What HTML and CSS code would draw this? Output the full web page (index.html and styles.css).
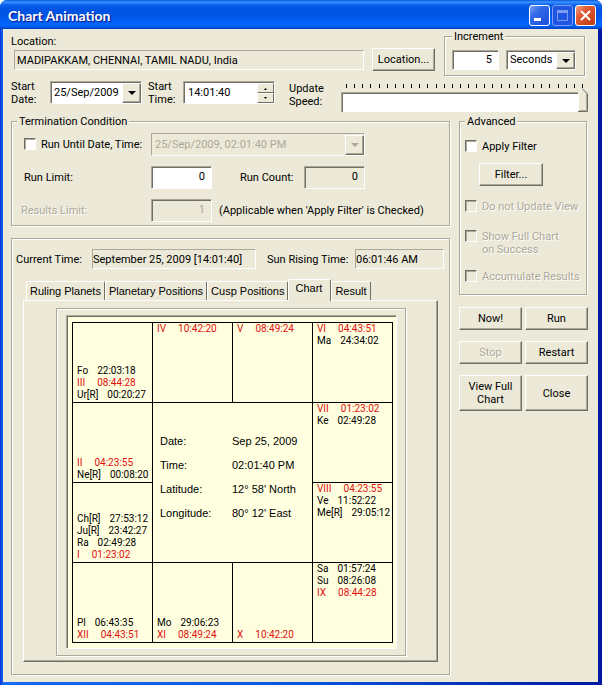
FILE: index.html
```html
<!DOCTYPE html>
<html lang="en">
<head>
    <meta charset="UTF-8">
    <meta name="viewport" content="width=device-width, initial-scale=1.0">
    <title>Chart Animation</title>
    <link rel="stylesheet" href="styles.css">
</head>
<body>

    <div class="window">
        <header class="titlebar">
            <h1>Chart Animation</h1>
            <button type="button" class="caption-btn" aria-label="Minimize">
                <svg width="19" height="19" viewBox="0 0 19 19"><path d="M4 12h7v3H4z" fill="#fff"/></svg>
            </button>
            <button type="button" class="caption-btn caption-disabled" aria-label="Maximize" disabled>
                <svg width="19" height="19" viewBox="0 0 19 19"><path d="M4.500 5v9.500h10V5M4 5h11" fill="none" stroke="#7f9df0" stroke-width="1"/><path d="M4 4h11v3H4z" fill="#7f9df0"/></svg>
            </button>
            <button type="button" class="caption-btn caption-close" aria-label="Close window">
                <svg width="19" height="19" viewBox="0 0 19 19"><path d="M5 5l9 9M14 5l-9 9" fill="none" stroke="#fff" stroke-width="2"/></svg>
            </button>
        </header>

        <main class="content">
            <div class="row row-location">
                <div class="location">
                    <label for="location">Location:</label>
                    <input type="text" id="location" class="static" readonly value="MADIPAKKAM, CHENNAI, TAMIL NADU, India">
                </div>
                <button type="button" class="btn btn-location">Location...</button>
                <fieldset class="group increment">
                    <legend>Increment</legend>
                    <input type="text" class="field number" aria-label="Increment value" value="5">
                    <span class="combo">
                        <select aria-label="Increment unit"><option>Seconds</option></select>
                    </span>
                </fieldset>
            </div>

            <div class="row row-start">
                <label for="start-date">Start<br>Date:</label>
                <span class="combo combo-date">
                    <select id="start-date"><option>25/Sep/2009</option></select>
                </span>
                <label for="start-time">Start<br>Time:</label>
                <span class="field spin">
                    <input type="text" id="start-time" value="14:01:40">
                    <span class="spin-buttons">
                        <button type="button" aria-label="Later"><svg width="5" height="3" viewBox="0 0 5 3"><path d="M1 3h3L2.500 1z"/></svg></button>
                        <button type="button" aria-label="Earlier"><svg width="5" height="3" viewBox="0 0 5 3"><path d="M1 0h3L2.500 2z"/></svg></button>
                    </span>
                </span>
                <label for="speed" class="speed-label">Update<br>Speed:</label>
                <div class="slider">
                    <div class="ticks"></div>
                    <input type="range" id="speed" min="1" max="30" value="30">
                </div>
            </div>

            <div class="columns">
                <div class="left">
                    <fieldset class="group termination">
                        <legend>Termination Condition</legend>
                        <label class="check"><input type="checkbox" id="until">Run Until Date, Time:</label>
                        <span class="combo combo-disabled">
                            <select aria-label="Run until" disabled><option>25/Sep/2009, 02:01:40 PM</option></select>
                        </span>
                        <label for="run-limit">Run Limit:</label>
                        <input type="text" id="run-limit" class="field number" value="0">
                        <label for="run-count" class="count-label">Run Count:</label>
                        <input type="text" id="run-count" class="field number readonly" readonly value="0">
                        <label for="results-limit" class="disabled">Results Limit:</label>
                        <input type="text" id="results-limit" class="field number readonly" disabled value="1">
                        <span class="note">(Applicable when 'Apply Filter' is Checked)</span>
                    </fieldset>

                    <section class="etched result">
                        <div class="times">
                            <label for="current-time">Current Time:</label>
                            <input type="text" id="current-time" class="static" readonly value="September 25, 2009 [14:01:40]">
                            <label for="sun-rise" class="sun-label">Sun Rising Time:</label>
                            <input type="text" id="sun-rise" class="static sun" readonly value="06:01:46 AM">
                        </div>

                        <div class="tabs" role="tablist">
                            <button type="button" role="tab">Ruling Planets</button>
                            <button type="button" role="tab">Planetary Positions</button>
                            <button type="button" role="tab">Cusp Positions</button>
                            <button type="button" role="tab" class="active" aria-selected="true">Chart</button>
                            <button type="button" role="tab">Result</button>
                        </div>
                        <div class="tab-panel" role="tabpanel">
                            <div class="etched frame">
                                <div class="sheet">
                                    <div class="chart">
                                        <div class="house bottom">
                                            <p>Fo<span>22:03:18</span></p>
                                            <p class="cusp">III<span>08:44:28</span></p>
                                            <p>Ur[R]<span>00:20:27</span></p>
                                        </div>
                                        <div class="house">
                                            <p class="cusp">IV<span>10:42:20</span></p>
                                        </div>
                                        <div class="house">
                                            <p class="cusp">V<span>08:49:24</span></p>
                                        </div>
                                        <div class="house">
                                            <p class="cusp">VI<span>04:43:51</span></p>
                                            <p>Ma<span>24:34:02</span></p>
                                        </div>
                                        <div class="house bottom">
                                            <p class="cusp">II<span>04:23:55</span></p>
                                            <p>Ne[R]<span>00:08:20</span></p>
                                        </div>
                                        <dl class="house details">
                                            <dt>Date:</dt><dd>Sep 25, 2009</dd>
                                            <dt>Time:</dt><dd>02:01:40 PM</dd>
                                            <dt>Latitude:</dt><dd>12° 58' North</dd>
                                            <dt>Longitude:</dt><dd>80° 12' East</dd>
                                        </dl>
                                        <div class="house">
                                            <p class="cusp">VII<span>01:23:02</span></p>
                                            <p>Ke<span>02:49:28</span></p>
                                        </div>
                                        <div class="house bottom">
                                            <p>Ch[R]<span>27:53:12</span></p>
                                            <p>Ju[R]<span>23:42:27</span></p>
                                            <p>Ra<span>02:49:28</span></p>
                                            <p class="cusp">I<span>01:23:02</span></p>
                                        </div>
                                        <div class="house">
                                            <p class="cusp">VIII<span>04:23:55</span></p>
                                            <p>Ve<span>11:52:22</span></p>
                                            <p>Me[R]<span>29:05:12</span></p>
                                        </div>
                                        <div class="house bottom">
                                            <p>Pl<span>06:43:35</span></p>
                                            <p class="cusp">XII<span>04:43:51</span></p>
                                        </div>
                                        <div class="house bottom">
                                            <p>Mo<span>29:06:23</span></p>
                                            <p class="cusp">XI<span>08:49:24</span></p>
                                        </div>
                                        <div class="house bottom">
                                            <p class="cusp">X<span>10:42:20</span></p>
                                        </div>
                                        <div class="house">
                                            <p>Sa<span>01:57:24</span></p>
                                            <p>Su<span>08:26:08</span></p>
                                            <p class="cusp">IX<span>08:44:28</span></p>
                                        </div>
                                    </div>
                                </div>
                            </div>
                        </div>
                    </section>
                </div>

                <aside class="right">
                    <fieldset class="group advanced">
                        <legend>Advanced</legend>
                        <label class="check"><input type="checkbox">Apply Filter</label>
                        <button type="button" class="btn btn-filter">Filter...</button>
                        <label class="check disabled"><input type="checkbox" disabled>Do not Update View</label>
                        <label class="check disabled"><input type="checkbox" disabled><span>Show Full Chart<br>on Success</span></label>
                        <label class="check disabled"><input type="checkbox" disabled>Accumulate Results</label>
                    </fieldset>
                    <div class="actions">
                        <button type="button" class="btn">Now!</button>
                        <button type="button" class="btn">Run</button>
                        <button type="button" class="btn disabled" disabled>Stop</button>
                        <button type="button" class="btn">Restart</button>
                        <button type="button" class="btn btn-tall">View Full<br>Chart</button>
                        <button type="button" class="btn btn-tall">Close</button>
                    </div>
                </aside>
            </div>
        </main>
    </div>

</body>
</html>
```
FILE: styles.css
```css
:root {
    --face: #ece9d8;
    --shadow: #aca899;
    --dark: #716f64;
}

* {
    box-sizing: border-box;
}

body {
    margin: 0;
    background: #fff;
    color: #000;
    font: 11px/13px Roboto, "DejaVu Sans Condensed", sans-serif;
}

input, select, button {
    margin: 0;
    font: inherit;
    color: inherit;
}

p, dl, dd, h1 {
    margin: 0;
}

label, legend, .note {
    white-space: nowrap;
}

/* window */
.window {
    display: flex;
    flex-direction: column;
    min-height: 100vh;
    padding: 0 4px 3px 3px;
    border-radius: 7px 7px 0 0;
    background: linear-gradient(90deg, #0831d9, #166aee 3px, #0855dd 50%, #0019a0 calc(100% - 2px));
}

.titlebar {
    display: flex;
    align-items: center;
    gap: 2px;
    height: 29px;
    margin: 0 -4px 0 -3px;
    padding: 2px 6px 0 8px;
    border-radius: 7px 7px 0 0;
    background: linear-gradient(#0a58dc, #3a93ff 2px, #0a60ee 5px, #0054e3 9px, #0055e5 16px, #0066ff 24px, #0062f8 26px, #0040c0);
}

.titlebar h1 {
    flex: 1;
    color: #fff;
    font: bold 14px/18px Lato, sans-serif;
    text-shadow: 1px 1px 1px #0f1089;
}

.caption-btn {
    display: flex;
    width: 21px;
    height: 21px;
    padding: 0;
    border: 1px solid #fff;
    border-radius: 3px;
    background: linear-gradient(135deg, #7ba2f0, #3169e8 35%, #1c50d8);
}

.caption-disabled {
    border-color: #7f9df0;
    background: #1f55e0;
}

.caption-close {
    background: linear-gradient(135deg, #f0a080, #e05a34 35%, #c03c10);
}

.content {
    flex: 1;
    padding: 1px 10px 7px 8px;
    background: var(--face);
}

/* bevels and frames */
.group, .etched {
    border: 1px solid var(--shadow);
    box-shadow: 1px 1px 0 #fff, inset 1px 1px 0 #fff;
}

.group {
    min-width: 0;
    margin: 0;
    padding: 0;
}

.group legend {
    padding: 0 2px;
    background: var(--face);
}

.field, .combo {
    border: 1px solid;
    border-color: var(--shadow) #fff #fff var(--shadow);
    box-shadow: inset 1px 1px 0 var(--dark);
    background: #fff;
}

.field {
    width: 61px;
    height: 23px;
    padding: 0 6px 2px 4px;
}

.number {
    text-align: right;
}

.readonly {
    background: var(--face);
}

.readonly:disabled {
    color: var(--shadow);
}

.static {
    width: 100%;
    height: 20px;
    padding: 0 2px;
    border: 1px solid;
    border-color: var(--shadow) #fff #fff var(--shadow);
    background: var(--face);
}

.btn {
    height: 23px;
    padding: 0 4px;
    border: 1px solid;
    border-color: #fff var(--dark) var(--dark) #fff;
    box-shadow: inset -1px -1px 0 var(--shadow);
    background: var(--face);
}

.disabled {
    color: var(--shadow);
    text-shadow: 1px 1px 0 #fff;
}

.combo {
    display: flex;
    position: relative;
    height: 23px;
}

.combo select {
    flex: 1;
    min-width: 0;
    padding: 0 18px 1px 3px;
    border: 0;
    appearance: none;
    background: none;
}

.combo::before {
    content: "";
    position: absolute;
    top: 1px;
    right: 0;
    bottom: 0;
    width: 17px;
    border: 1px solid;
    border-color: #fff var(--dark) var(--dark) #fff;
    box-shadow: inset -1px -1px 0 var(--shadow);
    background: var(--face);
    pointer-events: none;
}

.combo::after {
    content: "";
    position: absolute;
    top: 9px;
    right: 5px;
    border: solid transparent;
    border-width: 4px 4px 0;
    border-top-color: #000;
    pointer-events: none;
}

.combo-disabled, .combo-disabled select {
    background: var(--face);
    color: var(--shadow);
    opacity: 1;
}

.combo-disabled::after {
    border-top-color: var(--shadow);
}

.check {
    display: flex;
    align-items: flex-start;
    gap: 5px;
}

.check input {
    width: 12px;
    height: 12px;
    border: 1px solid;
    border-color: var(--dark) #fff #fff var(--dark);
    box-shadow: inset 1px 1px 0 var(--shadow);
    appearance: none;
    background: #fff;
}

.check input:disabled {
    background: var(--face);
}

/* top rows */
.row {
    display: flex;
    align-items: flex-start;
}

.row-location {
    margin-right: 3px;
}

.location {
    flex: 1;
    padding-top: 5px;
}

.location .static {
    display: block;
    width: calc(100% - 3px);
    margin: 2px 0 0 3px;
}

.btn-location {
    width: 63px;
    margin: 18px 9px 0 8px;
}

.increment {
    width: 141px;
    padding: 7px 8px 5px 7px;
}

.increment .field {
    float: left;
    width: 47px;
    height: 20px;
}

.increment .combo {
    height: 20px;
    margin-left: 54px;
}

.increment .combo::after {
    top: 8px;
}

.row-start {
    margin-top: 4px;
}

.row-start > label {
    width: 39px;
    flex: none;
}

.combo-date {
    width: 92px;
    margin: 1px 6px 0 0;
}

.row-start > label[for="start-time"] {
    width: 35px;
}

.spin {
    display: flex;
    width: 92px;
    margin: 1px 14px 0 0;
    padding: 1px 0 0 1px;
}

.spin input {
    flex: 1;
    min-width: 0;
    padding: 0 3px 1px;
    border: 0;
    background: none;
}

.spin-buttons {
    display: grid;
    grid-template-rows: 1fr 1fr;
    width: 17px;
}

.spin-buttons button {
    display: flex;
    align-items: center;
    justify-content: center;
    min-height: 0;
    padding: 0;
    border: 1px solid;
    border-color: #fff var(--dark) var(--dark) #fff;
    background: var(--face);
}

.row-start > .speed-label {
    width: 52px;
    padding-top: 2px;
}

.slider {
    flex: 1;
    padding-top: 4px;
}

.ticks {
    height: 4px;
    margin: 0 5px;
    background: repeating-linear-gradient(90deg, #000 0 1px, transparent 1px calc((100% - 1px) / 29));
}

.slider input {
    display: block;
    width: 100%;
    height: 24px;
    appearance: none;
    background: none;
}

.slider input::-webkit-slider-runnable-track {
    height: 20px;
    margin-top: 4px;
    background: linear-gradient(90deg, #fff calc(100% - 10px), var(--face) 0);
    box-shadow: inset 1px 1px 0 var(--shadow), inset 2px 2px 0 var(--dark), inset 0 -1px 0 #fff;
}

.slider input::-webkit-slider-thumb {
    width: 10px;
    height: 24px;
    margin-top: -4px;
    appearance: none;
    background: url("data:image/svg+xml,%3Csvg xmlns='http://www.w3.org/2000/svg' width='10' height='24'%3E%3Cpath d='M0 5L5 0l5 5v19H0z' fill='%23ece9d8'/%3E%3Cpath d='M.5 23V5L5 .5' fill='none' stroke='%23fff'/%3E%3Cpath d='M4 .5L9.500 6v17.500H0' fill='none' stroke='%23716f64'/%3E%3Cpath d='M8.500 6v16.500H1' fill='none' stroke='%23aca899'/%3E%3C/svg%3E") no-repeat;
}

/* columns */
.columns {
    display: grid;
    grid-template-columns: 1fr 129px;
    gap: 9px;
}

.left {
    min-width: 0;
    padding-top: 3px;
}

.termination {
    display: grid;
    grid-template-columns: 127px 61px 92px 61px;
    gap: 10px 0;
    align-items: center;
    padding: 5px 12px 3px;
}

.termination legend {
    margin-left: -7px;
}

.termination .combo {
    grid-column: 2 / -1;
}

.termination .note {
    grid-column: 3 / -1;
    padding-left: 7px;
}

.termination .disabled {
    margin-left: -3px;
}

.count-label {
    padding-left: 28px;
}

.result {
    margin-top: 12px;
    padding: 10px 11px 12px;
}

.times {
    display: flex;
    align-items: center;
    margin: 0 -6px 0 -7px;
}

.times label {
    flex: none;
    width: 76px;
}

.times .static {
    flex: 1;
    min-width: 0;
    padding: 0;
}

.times .sun-label {
    width: 99px;
    padding-left: 11px;
}

.times .sun {
    flex: none;
    width: 89px;
}

/* tabs */
.tabs {
    display: flex;
    align-items: flex-end;
    margin-top: 10px;
    padding-left: 3px;
    font: 11px/15px "Liberation Sans", sans-serif;
}

.tabs button {
    height: 19px;
    padding: 0 3px;
    border: 1px solid;
    border-color: #fff var(--dark) transparent #fff;
    border-bottom: 0;
    border-radius: 2px 2px 0 0;
    background: var(--face);
    white-space: nowrap;
}

.tabs .active {
    z-index: 1;
    height: 22px;
    margin-bottom: -1px;
    padding: 0 8px 4px 6px;
}

.tab-panel {
    padding: 7px 31px 5px 32px;
    border: 1px solid;
    border-color: #fff var(--dark) var(--dark) #fff;
    box-shadow: inset -1px -1px 0 var(--shadow);
}

.frame {
    padding: 6px 8px 6px 9px;
}

.sheet {
    padding: 6px 3px 5px 5px;
    border: 1px solid;
    border-color: var(--shadow) #fff #fff var(--shadow);
    box-shadow: inset 1px 1px 0 var(--dark);
    background: #ffffdf;
}

/* south indian chart, signs run round the edge */
.chart {
    display: grid;
    grid-template-columns: repeat(4, 1fr);
    grid-template-rows: repeat(4, 1fr);
    aspect-ratio: 1;
    border: solid #000;
    border-width: 1px 0 0 1px;
    font-size: 10px;
    line-height: 12px;
}

.house {
    display: flex;
    flex-direction: column;
    min-width: 0;
    padding: 0 0 1px 4px;
    border: solid #000;
    border-width: 0 1px 1px 0;
    white-space: nowrap;
}

.bottom {
    justify-content: flex-end;
}

.house span {
    margin-left: 9px;
}

.house .cusp {
    color: #e01010;
}

.cusp span {
    margin-left: 12px;
}

.details {
    display: grid;
    grid-area: 2 / 2 / 4 / 4;
    grid-template-columns: 72px 1fr;
    align-content: center;
    padding: 0 0 12px 7px;
    font: 11px/24px "Liberation Sans", sans-serif;
}

/* right column */
.right {
    padding-top: 3px;
}

.advanced {
    display: flex;
    flex-direction: column;
    gap: 17px;
    margin-right: 1px;
    padding: 12px 5px 11px;
}

.btn-filter {
    width: 64px;
    margin: -7px 0 -3px 14px;
}

.advanced .check:last-child {
    margin-top: -3px;
}

.actions {
    display: grid;
    grid-template-columns: 1fr 1fr;
    gap: 11px 3px;
    margin-top: 12px;
}

.btn-tall {
    height: 36px;
}
```
